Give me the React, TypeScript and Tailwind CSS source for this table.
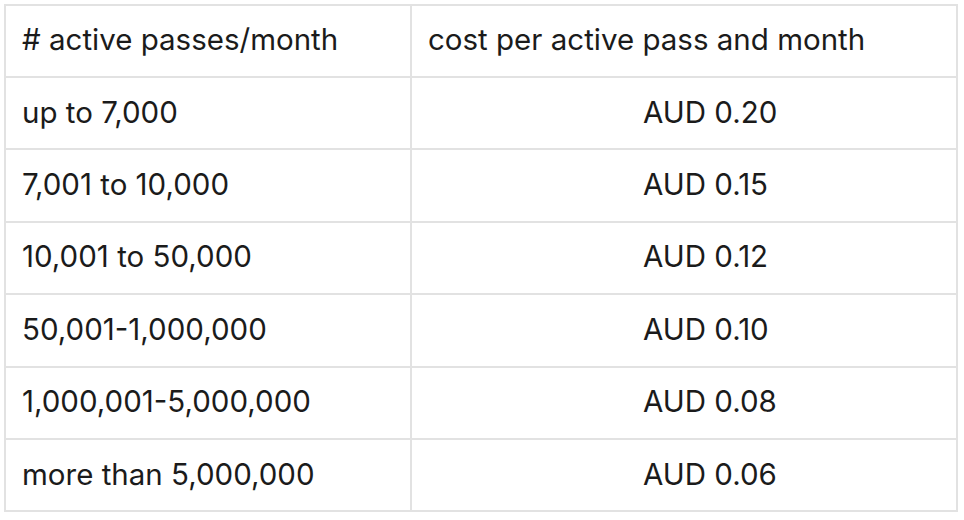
import React from 'react';

const rows = [
  ['up to 7,000', 'AUD 0.20'],
  ['7,001 to 10,000', 'AUD 0.15'],
  ['10,001 to 50,000', 'AUD 0.12'],
  ['50,001-1,000,000', 'AUD 0.10'],
  ['1,000,001-5,000,000', 'AUD 0.08'],
  ['more than 5,000,000', 'AUD 0.06'],
];

export default function App() {
  return (
    <div className="w-[964px] h-[520px] bg-white pt-[4px] pl-[4px] font-['Inter',sans-serif] text-[#1b1b1b] text-[29.5px]">
      <table className="border-collapse w-[954px] border-2 border-[#e2e2e2]">
        <thead>
          <tr className="h-[72px]">
            <th className="w-[406px] border-2 border-[#e2e2e2] pl-[16px] pb-[3px] text-left font-normal">
              # active passes/month
            </th>
            <th className="border-2 border-[#e2e2e2] pl-[16px] pb-[3px] text-left font-normal">
              cost per active pass and month
            </th>
          </tr>
        </thead>
        <tbody>
          {rows.map(([range, cost]) => (
            <tr key={range} className="h-[72.4px]">
              <td className="border-2 border-[#e2e2e2] pl-[16px] pb-[3px]">{range}</td>
              <td className="border-2 border-[#e2e2e2] pl-[231px] pb-[3px]">{cost}</td>
            </tr>
          ))}
        </tbody>
      </table>
    </div>
  );
}
